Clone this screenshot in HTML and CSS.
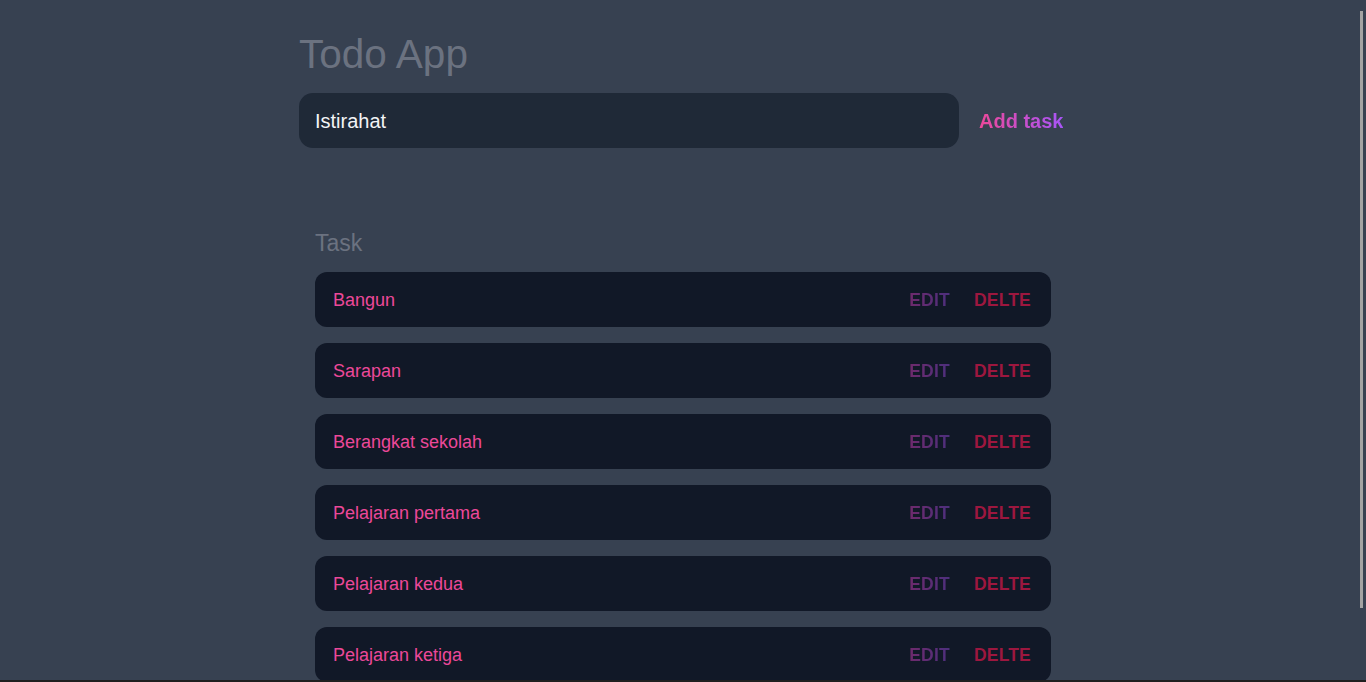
FILE: index.html
```html
<!DOCTYPE html>
<html lang="id">
<head>
<meta charset="utf-8">
<title>Todo App</title>
<link rel="stylesheet" href="styles.css">
</head>
<body>
<main class="app">
  <h1 class="title">Todo App</h1>
  <form class="add-form">
    <input class="task-input" type="text" value="Istirahat">
    <button class="add-btn" type="button">Add task</button>
  </form>
  <section class="tasks">
    <h2 class="tasks-heading">Task</h2>
    <ul class="task-list">
      <li class="task"><span class="task-name">Bangun</span><div class="task-actions"><button class="edit">EDIT</button><button class="delete">DELTE</button></div></li>
      <li class="task"><span class="task-name">Sarapan</span><div class="task-actions"><button class="edit">EDIT</button><button class="delete">DELTE</button></div></li>
      <li class="task"><span class="task-name">Berangkat sekolah</span><div class="task-actions"><button class="edit">EDIT</button><button class="delete">DELTE</button></div></li>
      <li class="task"><span class="task-name">Pelajaran pertama</span><div class="task-actions"><button class="edit">EDIT</button><button class="delete">DELTE</button></div></li>
      <li class="task"><span class="task-name">Pelajaran kedua</span><div class="task-actions"><button class="edit">EDIT</button><button class="delete">DELTE</button></div></li>
      <li class="task"><span class="task-name">Pelajaran ketiga</span><div class="task-actions"><button class="edit">EDIT</button><button class="delete">DELTE</button></div></li>
    </ul>
  </section>
</main>
<div class="scroll-thumb"></div>
<div class="bottom-edge"></div>
</body>
</html>
```

FILE: styles.css
```css
html {
  overflow: hidden;
  background: #374151;
}
body {
  margin: 0;
  background: #374151;
  font-family: "Liberation Sans", Arial, sans-serif;
}
.app {
  width: 768px;
  margin: 0 auto;
  padding-top: 29px;
}
.title {
  margin: 0;
  font-size: 40.5px;
  font-weight: 400;
  line-height: 50px;
  color: #6b7280;
}
.add-form {
  display: flex;
  align-items: center;
  margin-top: 14px;
}
.task-input {
  box-sizing: border-box;
  width: 660px;
  height: 55px;
  padding: 2px 16px 0;
  border: none;
  border-radius: 14px;
  background: #1f2937;
  color: #f3f4f6;
  font-family: inherit;
  font-size: 20px;
  outline: none;
}
.add-btn {
  margin-left: 20px;
  padding: 2px 0 0;
  border: none;
  background: linear-gradient(to right, #ec4899, #a855f7);
  -webkit-background-clip: text;
  background-clip: text;
  color: transparent;
  font-family: inherit;
  font-size: 20px;
  font-weight: 700;
  cursor: pointer;
}
.tasks {
  padding: 81px 16px 0;
}
.tasks-heading {
  margin: 0;
  font-size: 23px;
  font-weight: 400;
  line-height: 28px;
  color: #6b7280;
}
.task-list {
  list-style: none;
  margin: 15px 0 0;
  padding: 0;
  display: flex;
  flex-direction: column;
  gap: 16px;
}
.task {
  box-sizing: border-box;
  display: flex;
  align-items: center;
  justify-content: space-between;
  height: 55px;
  padding: 2px 20px 0 18px;
  border-radius: 12px;
  background: #111827;
}
.task-name {
  font-size: 18px;
  color: #ec4899;
}
.task-actions {
  display: flex;
  gap: 24px;
}
.task-actions button {
  padding: 0;
  border: none;
  background: none;
  font-family: inherit;
  font-size: 17.5px;
  font-weight: 700;
  letter-spacing: 0.2px;
  cursor: pointer;
}
.edit {
  background: linear-gradient(to right, #6e2a6c, #4d2f7d) !important;
  -webkit-background-clip: text !important;
  background-clip: text !important;
  color: transparent;
}
.delete {
  color: #9d173f;
}
.scroll-thumb {
  position: fixed;
  top: 11px;
  right: 3px;
  width: 3px;
  height: 597px;
  background: #a3a3a3;
}
.bottom-edge {
  position: fixed;
  left: 0;
  right: 0;
  bottom: 0;
  height: 2px;
  background: #1f1f1f;
}
```
